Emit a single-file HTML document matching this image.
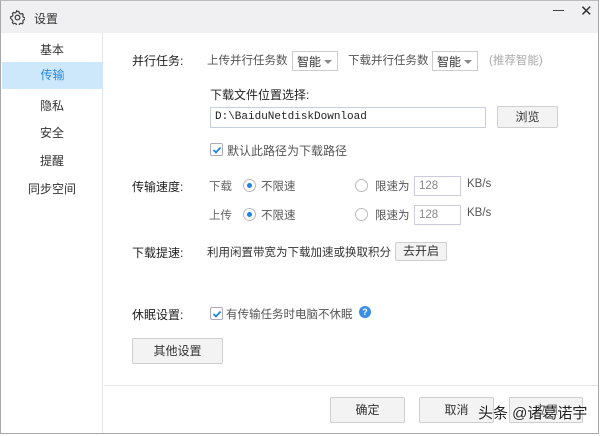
<!DOCTYPE html>
<html><head><meta charset="utf-8"><style>
*{margin:0;padding:0;box-sizing:border-box}
body{width:600px;height:436px;background:#fff;font-family:"Liberation Sans","Noto Sans CJK SC",sans-serif;font-size:11.5px;color:#333;position:relative;overflow:hidden}
.a{position:absolute;white-space:nowrap}
.win{position:absolute;left:0;top:0;width:599px;height:434px;border:1px solid #a8a8a8;border-top:1px solid #bbb}
.title{position:absolute;left:1px;top:1px;width:597px;height:32px;background:#f0f0f2}
.side{position:absolute;left:1px;top:33px;width:102px;height:400px;background:#fff;border-right:1px solid #e4e4e4}
.si{position:absolute;left:0;width:102px;text-align:center;font-size:12px;color:#333}
.sel{background:#cde8fb;color:#2a8ae0}
.lbl{color:#222;font-size:12px}
.g{color:#555}
.sb{position:absolute;height:20px;border:1px solid #ccc;background:#fff;font-size:12px;padding:1px 4px}
.sb:after{content:"";position:absolute;right:5px;top:8px;border:4px solid transparent;border-top:4px solid #888}
.btn{position:absolute;border:1px solid #cfcfcf;background:#f3f3f3;text-align:center;font-size:12px;color:#333;border-radius:2px}
.inp{position:absolute;border:1px solid #ccd;background:#fff;height:20px;font-size:11.5px;color:#888;padding:3px 4px}
.rad{position:absolute;width:13px;height:13px;border:1px solid #bbb;border-radius:50%;background:#fff}
.rad.on:after{content:"";position:absolute;left:3px;top:3px;width:5px;height:5px;border-radius:50%;background:#1b86e6}
.cb{position:absolute;width:13px;height:13px;border:1px solid #aab;background:#fff;border-radius:2px}
.cb svg{position:absolute;left:1px;top:1px}
</style></head><body>
<div class="win"></div>
<div class="title"></div>
<svg class="a" style="left:10px;top:10px" width="15" height="15" viewBox="0 0 16 16"><circle cx="8" cy="8" r="2.5" fill="none" stroke="#444" stroke-width="1.4"/><path d="M8 1.5l1.6.3.4 1.6 1.4.8 1.6-.5 1.1 1.2-.5 1.6.8 1.4 1.6.4v1.8l-1.6.4-.8 1.4.5 1.6-1.1 1.2-1.6-.5-1.4.8-.4 1.6H7.1l-.4-1.6-1.4-.8-1.6.5-1.1-1.2.5-1.6-.8-1.4L.7 9V7.2l1.6-.4.8-1.4-.5-1.6 1.1-1.2 1.6.5 1.4-.8.4-1.6z" fill="none" stroke="#444" stroke-width="1.3"/></svg>
<div class="a" style="left:34px;top:10px;font-size:12px;color:#333">设置</div>
<div class="a" style="left:553px;top:10px;width:11px;height:1px;background:#444"></div>
<div class="a" style="left:580px;top:2px;font-size:15px;color:#333">✕</div>
<div class="side">
<div class="si" style="top:8px">基本</div>
<div class="si sel" style="top:29px;height:27px;line-height:27px;left:1px;width:101px">传输</div>
<div class="si" style="top:64px">隐私</div>
<div class="si" style="top:91px">安全</div>
<div class="si" style="top:119px">提醒</div>
<div class="si" style="top:147px">同步空间</div>
</div>
<div class="a lbl" style="left:132px;top:52px">并行任务:</div>
<div class="a g" style="left:207px;top:52px;font-size:11.5px">上传并行任务数</div>
<div class="sb" style="left:292px;top:51px;width:46px">智能</div>
<div class="a g" style="left:348px;top:52px;font-size:11.5px">下载并行任务数</div>
<div class="sb" style="left:432px;top:51px;width:46px">智能</div>
<div class="a" style="left:489px;top:52px;color:#aaa;font-size:11.5px">(推荐智能)</div>
<div class="a lbl" style="left:210px;top:86px">下载文件位置选择:</div>
<div class="inp" style="left:210px;top:107px;width:276px;height:21px;font-family:'Liberation Mono',monospace;color:#222;font-size:11px;border-color:#c6d0dc;padding-top:3px">D:\BaiduNetdiskDownload</div>
<div class="btn" style="left:497px;top:106px;width:61px;height:22px;line-height:20px">浏览</div>
<div class="cb" style="left:210px;top:143px"><svg width="10" height="10"><path d="M1.5 5l2.5 2.5 4.5-5" fill="none" stroke="#1b86e6" stroke-width="1.8"/></svg></div>
<div class="a g" style="left:227px;top:142px;font-size:12px">默认此路径为下载路径</div>
<div class="a lbl" style="left:132px;top:178px">传输速度:</div>
<div class="a g" style="left:209px;top:178px;color:#666">下载</div>
<div class="rad on" style="left:243px;top:179px"></div>
<div class="a g" style="left:261px;top:178px">不限速</div>
<div class="rad" style="left:355px;top:179px"></div>
<div class="a g" style="left:375px;top:178px">限速为</div>
<div class="inp" style="left:414px;top:176px;width:47px">128</div>
<div class="a g" style="left:467px;top:178px">KB/s</div>
<div class="a g" style="left:209px;top:207px;color:#666">上传</div>
<div class="rad on" style="left:243px;top:208px"></div>
<div class="a g" style="left:261px;top:207px">不限速</div>
<div class="rad" style="left:355px;top:208px"></div>
<div class="a g" style="left:375px;top:207px">限速为</div>
<div class="inp" style="left:414px;top:205px;width:47px">128</div>
<div class="a g" style="left:467px;top:207px">KB/s</div>
<div class="a lbl" style="left:132px;top:244px">下载提速:</div>
<div class="a" style="left:207px;top:244px;color:#333;font-size:11.5px">利用闲置带宽为下载加速或换取积分</div>
<div class="btn" style="left:395px;top:242px;width:52px;height:19px;line-height:17px">去开启</div>
<div class="a lbl" style="left:132px;top:306px">休眠设置:</div>
<div class="cb" style="left:210px;top:307px"><svg width="10" height="10"><path d="M1.5 5l2.5 2.5 4.5-5" fill="none" stroke="#1b86e6" stroke-width="1.8"/></svg></div>
<div class="a g" style="left:226px;top:306px;font-size:11.5px">有传输任务时电脑不休眠</div>
<div class="a" style="left:359px;top:306px;width:12px;height:12px;border-radius:50%;background:#3a8ee6;color:#fff;font-size:9px;font-weight:bold;text-align:center;line-height:12px">?</div>
<div class="btn" style="left:132px;top:338px;width:91px;height:26px;line-height:24px">其他设置</div>
<div class="a" style="left:104px;top:385px;width:494px;height:1px;background:#e6e6e6"></div>
<div class="btn" style="left:330px;top:397px;width:75px;height:26px;line-height:24px">确定</div>
<div class="btn" style="left:419px;top:397px;width:75px;height:26px;line-height:24px">取消</div>
<div class="btn" style="left:509px;top:397px;width:74px;height:26px;line-height:24px">应用</div>
<div class="a" style="left:478px;top:402px;font-size:15px;color:#222;text-shadow:0 0 2px #fff,0 0 2px #fff">头条 @诸葛诺宇</div>
</body></html>
